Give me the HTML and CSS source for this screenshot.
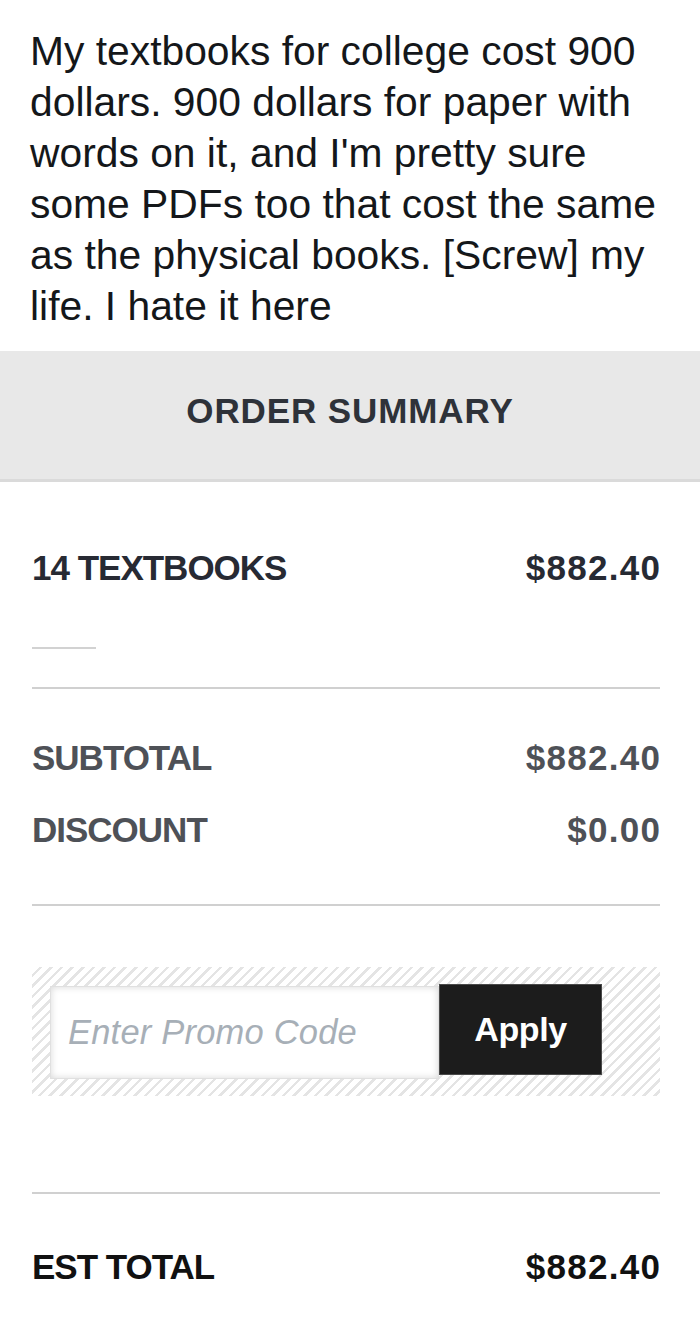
FILE: index.html
```html
<!DOCTYPE html>
<html>
<head>
<meta charset="utf-8">
<link rel="stylesheet" href="styles.css">
</head>
<body>
<p class="tweet">My textbooks for college cost 900 dollars. 900 dollars for paper with words on it, and I'm pretty sure some PDFs too that cost the same as the physical books. [Screw] my life. I hate it here</p>
<section class="summary">
  <header class="summary-head">ORDER SUMMARY</header>
  <div class="summary-body">
    <div class="row row-items"><span class="label">14 TEXTBOOKS</span><span class="price">$882.40</span></div>
    <div class="short-rule"></div>
    <div class="rule rule-1"></div>
    <div class="row row-sub"><span class="label">SUBTOTAL</span><span class="price">$882.40</span></div>
    <div class="row row-disc"><span class="label">DISCOUNT</span><span class="price">$0.00</span></div>
    <div class="rule rule-2"></div>
    <div class="promo">
      <div class="promo-input">Enter Promo Code</div>
      <button class="promo-btn">Apply</button>
    </div>
    <div class="rule rule-3"></div>
    <div class="row row-total"><span class="label">EST TOTAL</span><span class="price">$882.40</span></div>
  </div>
</section>
</body>
</html>
```
FILE: styles.css
```css
html, body {
  margin: 0;
  padding: 0;
  background: #ffffff;
}

body {
  font-family: "Liberation Sans", Arial, sans-serif;
  width: 700px;
}

.tweet {
  margin: 0;
  padding: 26px 30px 0 30px;
  font-size: 40.8px;
  line-height: 51px;
  color: #14171a;
}

.summary {
  margin-top: 19px;
}

.summary-head {
  background: #e8e8e8;
  border-bottom: 3px solid #dadada;
  display: flex;
  align-items: center;
  justify-content: center;
  padding-bottom: 8px;
  height: 120px;
  font-size: 35px;
  font-weight: 700;
  color: #2e3239;
  letter-spacing: 0.9px;
}

.summary-body {
  padding: 0 40px 0 32px;
}

.row {
  height: 40px;
  display: flex;
  align-items: center;
  justify-content: space-between;
  font-size: 35px;
  line-height: 40px;
  font-weight: 700;
}

.label {
  letter-spacing: -1px;
}

.price {
  letter-spacing: 1.3px;
  margin-right: -1.3px;
}

.row-items {
  margin-top: 66px;
  color: #272a33;
}

.short-rule {
  margin-top: 59px;
  width: 64px;
  height: 2px;
  background: #d2d2d2;
}

.rule {
  height: 2px;
  background: #d0d0d0;
}

.rule-1 {
  margin-top: 38px;
}

.row-sub {
  margin-top: 49px;
  color: #4e5157;
}

.row-disc {
  margin-top: 32px;
  color: #4e5157;
}

.rule-2 {
  margin-top: 54px;
}

.promo {
  margin-top: 61px;
  height: 129px;
  box-sizing: border-box;
  padding: 17px 0 0 18px;
  display: flex;
  align-items: flex-start;
  background: repeating-linear-gradient(135deg, #ffffff 0 5px, #e4e4e4 5px 7.5px);
}

.promo-input {
  margin-top: 2px;
  width: 389px;
  height: 93px;
  box-sizing: border-box;
  background: #ffffff;
  border: 1px solid #e0e0e0;
  box-shadow: inset 0 0 7px rgba(0, 0, 0, 0.16);
  display: flex;
  align-items: center;
  padding-left: 17px;
  font-size: 34.5px;
  font-style: italic;
  color: #a7afb7;
  letter-spacing: 0.2px;
}

.promo-btn {
  width: 163px;
  height: 91px;
  box-sizing: border-box;
  background: #1c1c1c;
  border: 1px solid #4a4a4a;
  color: #ffffff;
  font-family: "Liberation Sans", Arial, sans-serif;
  font-size: 34px;
  font-weight: 700;
  letter-spacing: -0.4px;
  padding: 0;
  margin: 0;
}

.rule-3 {
  margin-top: 96px;
}

.row-total {
  margin-top: 53px;
  color: #111111;
}
```
